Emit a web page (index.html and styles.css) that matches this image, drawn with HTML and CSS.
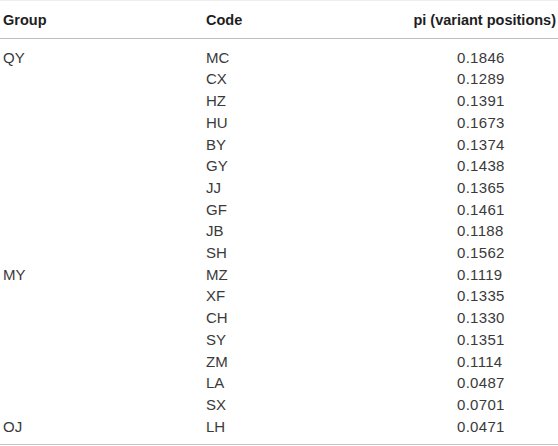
FILE: index.html
```html
<!DOCTYPE html>
<html>
<head>
<meta charset="utf-8">
<link rel="stylesheet" href="styles.css">
</head>
<body>
<table class="data">
  <thead>
    <tr><th class="c1">Group</th><th class="c2">Code</th><th class="c3">pi (variant positions)</th></tr>
  </thead>
  <tbody>
    <tr class="first"><td class="c1">QY</td><td class="c2">MC</td><td class="c3">0.1846</td></tr>
    <tr><td class="c1"></td><td class="c2">CX</td><td class="c3">0.1289</td></tr>
    <tr><td class="c1"></td><td class="c2">HZ</td><td class="c3">0.1391</td></tr>
    <tr><td class="c1"></td><td class="c2">HU</td><td class="c3">0.1673</td></tr>
    <tr><td class="c1"></td><td class="c2">BY</td><td class="c3">0.1374</td></tr>
    <tr><td class="c1"></td><td class="c2">GY</td><td class="c3">0.1438</td></tr>
    <tr><td class="c1"></td><td class="c2">JJ</td><td class="c3">0.1365</td></tr>
    <tr><td class="c1"></td><td class="c2">GF</td><td class="c3">0.1461</td></tr>
    <tr><td class="c1"></td><td class="c2">JB</td><td class="c3">0.1188</td></tr>
    <tr><td class="c1"></td><td class="c2">SH</td><td class="c3">0.1562</td></tr>
    <tr><td class="c1">MY</td><td class="c2">MZ</td><td class="c3">0.1119</td></tr>
    <tr><td class="c1"></td><td class="c2">XF</td><td class="c3">0.1335</td></tr>
    <tr><td class="c1"></td><td class="c2">CH</td><td class="c3">0.1330</td></tr>
    <tr><td class="c1"></td><td class="c2">SY</td><td class="c3">0.1351</td></tr>
    <tr><td class="c1"></td><td class="c2">ZM</td><td class="c3">0.1114</td></tr>
    <tr><td class="c1"></td><td class="c2">LA</td><td class="c3">0.0487</td></tr>
    <tr><td class="c1"></td><td class="c2">SX</td><td class="c3">0.0701</td></tr>
    <tr class="last"><td class="c1">OJ</td><td class="c2">LH</td><td class="c3">0.0471</td></tr>
  </tbody>
</table>
</body>
</html>
```
FILE: styles.css
```css
html, body {
  margin: 0;
  padding: 0;
  background: #fff;
}
.data {
  width: 558px;
  border-collapse: collapse;
  border-spacing: 0;
  font-family: "Liberation Sans", Arial, sans-serif;
  border-top: 1px solid #eeeeee;
  border-bottom: 1px solid #c4c4c4;
}
.data th, .data td {
  padding: 0;
  line-height: 21.7px;
  vertical-align: top;
  white-space: nowrap;
}
.data th {
  font-size: 14.5px;
  font-weight: bold;
  color: #1e1e1e;
  padding-top: 9px;
  padding-bottom: 6px;
  border-bottom: 1.5px solid #bdbdbd;
}
.data td {
  font-size: 15px;
  color: #3a3a3a;
}
.c1 {
  width: 203px;
  padding-left: 3px !important;
  text-align: left;
}
.c2 {
  width: 206px;
  text-align: left;
}
.c3 {
  text-align: right;
  padding-right: 2px !important;
}
.data td.c3 {
  text-align: left;
  padding-left: 45px !important;
  letter-spacing: 0.3px;
}
.data tr.first td {
  padding-top: 8px;
}
.data tr.last td {
  padding-bottom: 7px;
}
```
